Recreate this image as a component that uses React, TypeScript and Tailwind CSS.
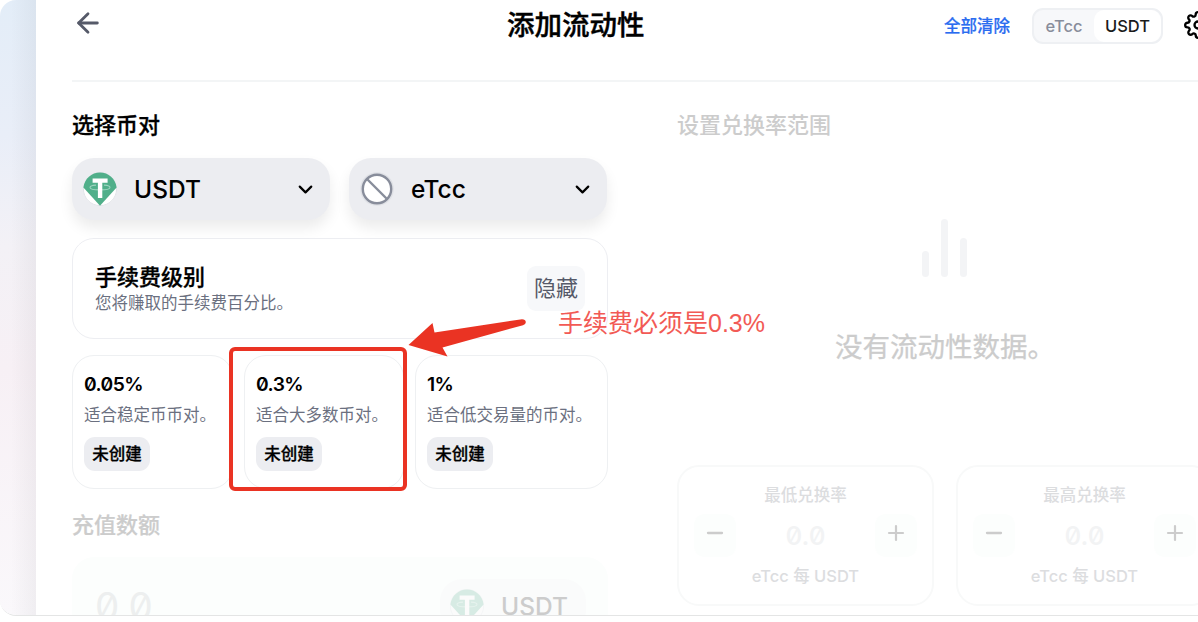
import React from "react";
import { ArrowLeft, ChevronDown, Minus, Plus } from "lucide-react";
import { FiSettings } from "react-icons/fi";

function TetherIcon() {
  return (
    <svg viewBox="0 0 34 34" className="size-[34px] shrink-0">
      <circle cx="17" cy="17" r="17" fill="#fff" />
      <circle cx="17" cy="17" r="16.6" fill="none" stroke="#d9dce2" strokeWidth="0.8" />
      <path d="M0.4 15.5C1.5 6.500 8.500 0.400 17 0.400S32.500 6.500 33.600 15.500L17 33.700Z" fill="#50AF8A" />
      <path d="M7 15.500c0 3.200 20 3.200 20 0c0-1.600-4-2.300-6-2.400M7 15.500c0-1.600 4-2.300 6-2.400" fill="none" stroke="#9ad3bd" strokeWidth="1.100" />
      <path d="M9.600 6.500h15v4.200h-5.300v15.300h-4.400V10.700H9.600z" fill="#fff" />
    </svg>
  );
}

function BlockedIcon() {
  return (
    <svg viewBox="0 0 34 34" className="size-[34px] shrink-0">
      <circle cx="17" cy="17" r="16.800" fill="#dfe1e6" />
      <circle cx="17" cy="17" r="14.200" fill="#fff" stroke="#888D9B" strokeWidth="2.400" />
      <path d="M7 7l20 20" stroke="#888D9B" strokeWidth="2.400" />
    </svg>
  );
}

function TokenSelect({ icon, name }: { icon: React.ReactNode; name: string }) {
  return (
    <div className="flex h-[62px] w-[258px] items-center rounded-[22px] bg-[#ecedf1] pl-[11px] pr-[13px] shadow-[0_8px_14px_rgba(0,0,0,0.08)]">
      {icon}
      <span className="ml-[17px] flex-1 text-[24.500px] font-medium">{name}</span>
      <ChevronDown size={23} strokeWidth={2.300} />
    </div>
  );
}

function FeeTier({ fee, text, width }: { fee: string; text: string; width: string }) {
  return (
    <div className={"flex h-[134px] flex-col items-start rounded-[22px] border-[1.500px] border-[#eef0f2] pl-[11px] pt-[14px] " + width}>
      <div className="h-[28px] text-[19.250px] font-semibold leading-[28px] tracking-[-0.600px]">{fee}</div>
      <div className="mt-[5px] h-[24px] whitespace-nowrap text-[16.500px] leading-[24px] text-[#6b7080]">{text}</div>
      <div className="mt-[10px] flex h-[34px] w-[66px] items-center justify-center rounded-[11px] bg-[#ecedf1] text-[16.500px] font-medium [-webkit-text-stroke:0.3px]">未创建</div>
    </div>
  );
}

function StepButton({ children }: { children: React.ReactNode }) {
  return <div className="flex h-[43px] w-[42px] items-center justify-center rounded-[11px] bg-[#fcfefd] pb-[5px] text-[#cccccc]">{children}</div>;
}

function PriceCard({ title }: { title: string }) {
  return (
    <div className="flex h-[141px] w-[257px] shrink-0 flex-col items-center rounded-[22px] border-2 border-[#f8f9f9] px-[15px] pt-[16px]">
      <div className="h-[24px] text-[16.500px] font-medium leading-[24px] text-[#dcdddf]">{title}</div>
      <div className="mt-[7px] flex h-[43px] w-full items-center justify-between">
        <StepButton><Minus size={24} strokeWidth={2.300} /></StepButton>
        <span className="text-[26px] font-medium text-[#f2f3f4]">0.0</span>
        <StepButton><Plus size={24} strokeWidth={2.200} /></StepButton>
      </div>
      <div className="mt-[7px] h-[24px] text-[16.500px] font-medium leading-[24px] text-[#dcdddf]">eTcc 每 USDT</div>
    </div>
  );
}

export default function App() {
  return (
    <div className="h-[622px] w-[1198px] overflow-hidden bg-white font-['Inter','Noto_Sans_CJK_SC',sans-serif] text-black [font-feature-settings:'zero']">
      <div className="relative flex h-[616px] overflow-hidden rounded-l-[16px] border-b border-[#e4e5e5]">
        <div className="w-[36px] shrink-0 bg-[linear-gradient(to_right,transparent_30%,rgba(80,80,90,0.06)),linear-gradient(to_bottom,#e3edf8_0%,#e9eef8_22%,#f3f1f6_40%,#f7f0f5_60%,#faf8fb_100%)]" />
        <div className="flex w-[1162px] flex-col bg-white pl-[36px]">
          <header className="flex h-[82px] shrink-0 items-start border-b-2 border-[#f3f5f6]">
            <div className="flex h-[46px] w-[435px] shrink-0 items-center">
              <ArrowLeft size={32} strokeWidth={2.100} className="text-[#565a69]" />
            </div>
            <h1 className="flex h-[52px] w-[437px] shrink-0 items-center text-[27.500px] font-medium [-webkit-text-stroke:0.4px]">添加流动性</h1>
            <span className="flex h-[52px] w-[88px] shrink-0 items-center text-[16.500px] font-medium text-[#2a6cf0] [-webkit-text-stroke:0.2px]">全部清除</span>
            <div className="mt-[8px] flex h-[36px] w-[131px] shrink-0 items-center rounded-[11px] border-2 border-[#eef0f3] bg-[#f7f8fa] text-[16.500px] font-medium">
              <span className="w-[60px] text-center text-[#888d9b]">eTcc</span>
              <span className="flex h-[32px] flex-1 items-center justify-center rounded-[10px] bg-white text-[#1b1b1b]">USDT</span>
            </div>
            <FiSettings size={28} className="ml-[21px] mt-[11px] shrink-0" />
          </header>
          <div className="flex">
            <section className="w-[536px] shrink-0 pt-[27px]">
              <h2 className="h-[32px] text-[22px] font-medium leading-[32px] [-webkit-text-stroke:0.3px]">选择币对</h2>
              <div className="mt-[17px] flex justify-between pr-px">
                <TokenSelect icon={<TetherIcon />} name="USDT" />
                <TokenSelect icon={<BlockedIcon />} name="eTcc" />
              </div>
              <div className="mt-[18px] flex h-[101px] items-center justify-between rounded-[22px] border-[1.500px] border-[#edeef2] pl-[22px] pr-[22px]">
                <div className="pt-[2px]">
                  <div className="h-[27px] text-[22px] font-medium leading-[27px] [-webkit-text-stroke:0.3px]">手续费级别</div>
                  <div className="h-[24px] text-[16.500px] leading-[24px] text-[#6b7080]">您将赚取的手续费百分比。</div>
                </div>
                <div className="flex h-[45px] w-[58px] items-center justify-center rounded-[9px] bg-[#f7f8fa] text-[22px] text-[#565a69]">隐藏</div>
              </div>
              <div className="mt-[16px] flex gap-[11px]">
                <FeeTier fee="0.05%" text="适合稳定币币对。" width="w-[161px]" />
                <FeeTier fee="0.3%" text="适合大多数币对。" width="w-[160px]" />
                <FeeTier fee="1%" text="适合低交易量的币对。" width="w-[193px]" />
              </div>
              <h2 className="mt-[20px] h-[32px] text-[22px] font-medium leading-[32px] text-[#cccccc] [-webkit-text-stroke:0.2px]">充值数额</h2>
              <div className="mt-[16px] flex h-[130px] items-start justify-between rounded-[22px] bg-[#fcfefd] pl-[23px] pr-[22px] pt-[22px]">
                <span className="mt-px text-[38.500px] leading-[53px] text-[#edefef]">0.0</span>
                <div className="flex h-[53px] w-[146px] items-center rounded-[22px] bg-[#fafbfb] pl-[10px]">
                  <div className="opacity-20"><TetherIcon /></div>
                  <span className="ml-[17px] pt-[2px] text-[24.500px] font-medium text-[#cccccc]">USDT</span>
                </div>
              </div>
            </section>
            <section className="ml-[69px] w-[536px] shrink-0 pt-[27px]">
              <h2 className="h-[32px] text-[22px] font-medium leading-[32px] text-[#cccccc]">设置兑换率范围</h2>
              <div className="mt-[78px] flex h-[58px] items-end justify-center gap-[12px] pr-px">
                <div className="h-[26px] w-[7px] rounded-full bg-[#f3f4f6]" />
                <div className="h-[58px] w-[7px] rounded-full bg-[#f3f4f6]" />
                <div className="h-[39px] w-[7px] rounded-full bg-[#f3f4f6]" />
              </div>
              <div className="mt-[51px] flex h-[40px] items-center justify-center text-[27.500px] text-[#cccccc] [-webkit-text-stroke:0.3px]">没有流动性数据。</div>
              <div className="mt-[97px] flex gap-[22px]">
                <PriceCard title="最低兑换率" />
                <PriceCard title="最高兑换率" />
              </div>
            </section>
          </div>
        </div>
        <div className="absolute left-[229px] top-[347px] h-[144px] w-[178px] rounded-[6px] border-4 border-[#ea3323]" />
        <svg viewBox="0 0 120 40" className="absolute left-[408px] top-[318px] h-[40px] w-[120px]">
          <path d="M0.500 27L24.500 5L26.500 14.500L114 1.200Q117.500 1.200 117.800 4Q118 6.500 115 7.200L34.500 29.500L39.500 38.500Z" fill="#ea3323" />
        </svg>
        <div className="absolute left-[558px] top-[306px] whitespace-nowrap text-[25px] leading-[34px] text-[#f25a55] [font-feature-settings:normal] font-['Liberation_Sans','Noto_Sans_CJK_SC',sans-serif]">手续费必须是0.3%</div>
      </div>
    </div>
  );
}
